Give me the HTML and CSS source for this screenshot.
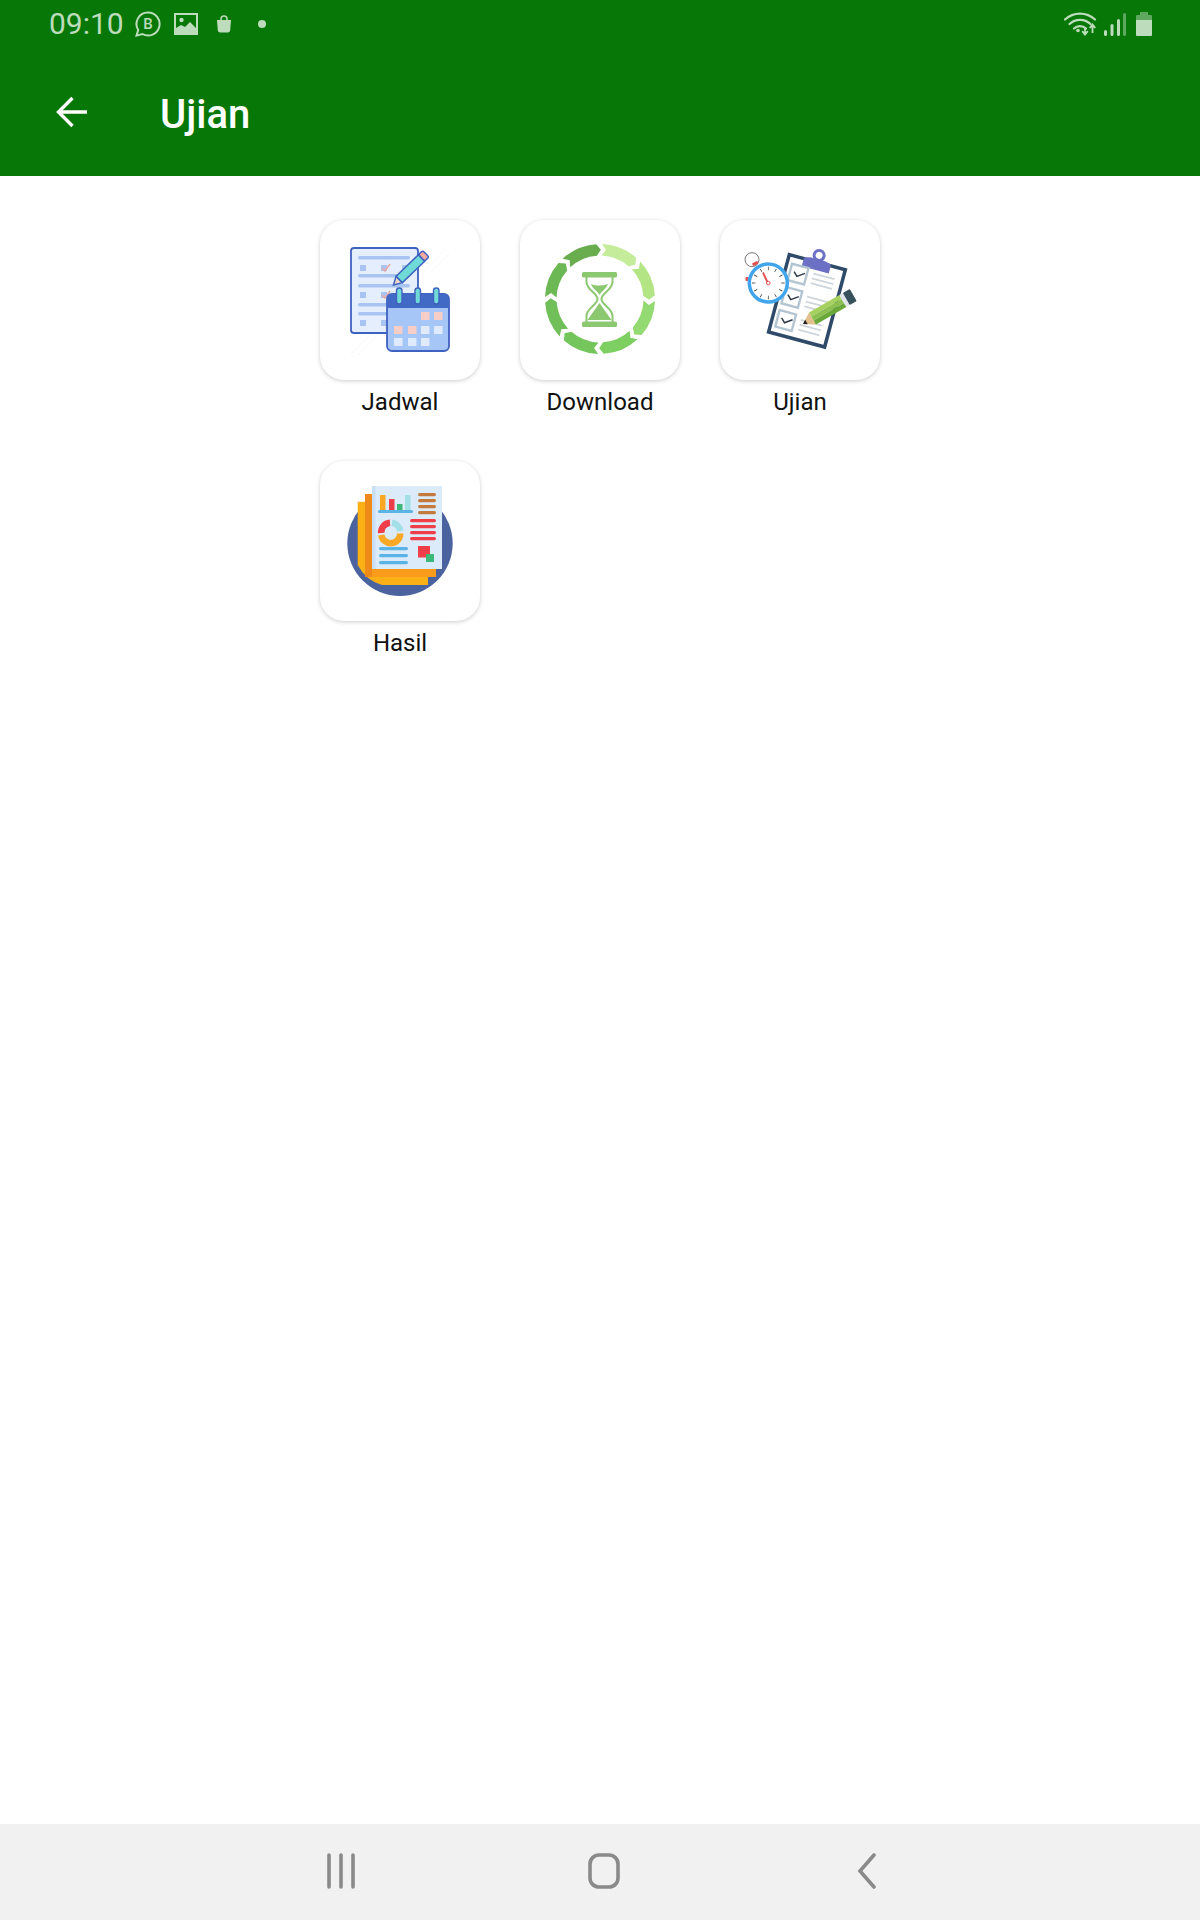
FILE: index.html
```html
<!DOCTYPE html>
<html lang="en">
<head>
    <meta charset="UTF-8">
    <meta name="viewport" content="width=device-width, initial-scale=1.0">
    <title>Ujian</title>
    <link rel="stylesheet" href="styles.css">
</head>
<body>
    <div class="screen">
        <header class="header">
            <div class="status">
                <div class="status-left">
                    <span class="time">09:10</span>
                    <svg class="ic-wa" viewBox="0 0 28 28" width="28" height="28">
                        <path d="M14 2.500a11.500 11.500 0 1 1-5.600 21.500L2.500 25.600l1.700-5.600A11.500 11.500 0 0 1 14 2.500z" fill="none" stroke="#bcdcbc" stroke-width="2"/>
                        <text class="ic-wa-letter" x="14" y="19">B</text>
                    </svg>
                    <svg class="ic-img" viewBox="0 0 24 22" width="24" height="22">
                        <rect x="1" y="1" width="22" height="20" fill="#077808" stroke="#bcdcbc" stroke-width="2"/>
                        <circle cx="7.500" cy="7" r="2.200" fill="#bcdcbc"/>
                        <path d="M2 20v-5l5-3 4 2 5-5 6 6v5z" fill="#bcdcbc"/>
                    </svg>
                    <svg class="ic-bag" viewBox="0 0 16 18" width="16" height="18">
                        <path d="M1 5h14l-.8 10.500a2.500 2.500 0 0 1-2.500 2H4.300a2.500 2.500 0 0 1-2.500-2z" fill="#bcdcbc"/>
                        <path d="M5 6V4a3 3 0 0 1 6 0v2" fill="none" stroke="#bcdcbc" stroke-width="1.500"/>
                    </svg>
                    <span class="dot"></span>
                </div>
                <div class="status-right">
                    <svg viewBox="0 0 33 24" width="33" height="24">
                        <g fill="none" stroke="#bcdcbc" stroke-width="2.200" stroke-linecap="round">
                            <path d="M1 7.500a22 22 0 0 1 30 0"/>
                            <path d="M5.500 12a15.500 15.500 0 0 1 21 0"/>
                            <path d="M10 16.500a9 9 0 0 1 12 0"/>
                        </g>
                        <circle cx="14" cy="18.500" r="1.800" fill="#bcdcbc"/>
                        <path d="M21 15v7m-2.800-2.800L21 22.500l2.800-3.300M28.500 21v-8m-2.800 3L28.500 12.500 31.300 16" fill="none" stroke="#bcdcbc" stroke-width="1.800"/>
                    </svg>
                    <svg viewBox="0 0 22 23" width="22" height="23">
                        <rect x="0" y="17" width="3" height="6" rx="1.500" fill="#bcdcbc"/>
                        <rect x="6.500" y="11" width="3" height="12" rx="1.500" fill="#bcdcbc"/>
                        <rect x="13" y="6" width="3" height="17" rx="1.500" fill="#bcdcbc"/>
                        <rect x="19" y="0" width="3" height="23" rx="1.500" fill="#5fa95f"/>
                    </svg>
                    <svg viewBox="0 0 16 24" width="16" height="24">
                        <path d="M4 0h8v3h3a1 1 0 0 1 1 1v4H0V4a1 1 0 0 1 1-1h3z" fill="#5fa95f"/>
                        <path d="M0 8h16v15a1 1 0 0 1-1 1H1a1 1 0 0 1-1-1z" fill="#bcdcbc"/>
                    </svg>
                </div>
            </div>
            <div class="toolbar">
                <svg class="back" viewBox="0 0 32 32" width="32" height="32">
                    <path d="M31 16H3M16.500 2 2.500 16l14 14" fill="none" stroke="#fff" stroke-width="3.400"/>
                </svg>
                <h1 class="title">Ujian</h1>
            </div>
        </header>

        <main class="menu">
            <div class="menu-item">
                <div class="card">
                    <svg viewBox="0 1 160 160">
                        <g stroke="#f6f8fb" stroke-width="1">
                            <path d="M104 52l22-22M110 54l20-20M30 136l30-30M38 136l24-24"/>
                        </g>
                        <rect x="31" y="29" width="67" height="85" rx="3" fill="#e4eefc" stroke="#3f62c0" stroke-width="1.800"/>
                        <g fill="#a9c4f2">
                            <rect x="38" y="37" width="52" height="3.500" rx="1.700"/>
                            <rect x="38" y="55" width="52" height="3.500" rx="1.700"/>
                            <rect x="38" y="65" width="52" height="3.500" rx="1.700"/>
                            <rect x="38" y="84" width="52" height="3.500" rx="1.700"/>
                            <rect x="38" y="93" width="52" height="3.500" rx="1.700"/>
                            <rect x="40" y="46" width="6" height="6"/>
                            <rect x="40" y="73" width="6" height="6"/>
                            <rect x="40" y="101" width="6" height="6"/>
                            <rect x="61" y="46" width="6" height="6"/>
                            <rect x="61" y="73" width="6" height="6"/>
                            <rect x="61" y="101" width="6" height="6"/>
                            <rect x="82" y="46" width="6" height="6"/>
                        </g>
                        <path d="M62 49l3 3 5-7M62 76l3 3 5-7" fill="none" stroke="#e9a9a6" stroke-width="1.500"/>
                        <g transform="translate(73.500 66) rotate(-44)">
                            <path d="M0 0l8-4.500v9z" fill="#f4d9c8" stroke="#3f62c0" stroke-width="1.500"/>
                            <rect x="8" y="-4.500" width="31" height="9" fill="#6fdad6" stroke="#3f62c0" stroke-width="1.500"/>
                            <rect x="39" y="-4.500" width="6" height="9" rx="2" fill="#f2a9a0" stroke="#3f62c0" stroke-width="1.500"/>
                        </g>
                        <rect x="67" y="75" width="62" height="57" rx="5" fill="#a6c6f7" stroke="#3f62c0" stroke-width="1.800"/>
                        <path d="M67 89v-9a5 5 0 0 1 5-5h52a5 5 0 0 1 5 5v9z" fill="#4169c6"/>
                        <g fill="#6fdad6" stroke="#3f62c0" stroke-width="1.400">
                            <rect x="76.500" y="69" width="5.500" height="16" rx="2.700"/>
                            <rect x="95" y="69" width="5.500" height="16" rx="2.700"/>
                            <rect x="113.500" y="69" width="5.500" height="16" rx="2.700"/>
                        </g>
                        <g fill="#f7cdc7">
                            <rect x="101" y="93" width="8.500" height="8"/>
                            <rect x="114" y="93" width="8.500" height="8"/>
                            <rect x="74" y="107" width="8.500" height="8"/>
                            <rect x="88" y="107" width="8.500" height="8"/>
                        </g>
                        <g fill="#dfeafb">
                            <rect x="101" y="107" width="8.500" height="8"/>
                            <rect x="114" y="107" width="8.500" height="8"/>
                            <rect x="74" y="119" width="8.500" height="8"/>
                            <rect x="88" y="119" width="8.500" height="8"/>
                            <rect x="101" y="119" width="8.500" height="8"/>
                        </g>
                    </svg>
                </div>
                <span class="menu-label">Jadwal</span>
            </div>

            <div class="menu-item">
                <div class="card">
                    <svg viewBox="0 1 160 160">
                        <defs>
                            <path id="seg" d="M81.900 25A55 55 0 0 1 116.100 38.500L115.400 45.800 108.500 47.200A43.500 43.500 0 0 0 81.500 36.500L86 31.100Z"/>
                        </defs>
                        <use href="#seg" fill="#c4ec9b"/>
                        <use href="#seg" fill="#b3e585" transform="rotate(45 80 80)"/>
                        <use href="#seg" fill="#93da72" transform="rotate(90 80 80)"/>
                        <use href="#seg" fill="#7dcf62" transform="rotate(135 80 80)"/>
                        <use href="#seg" fill="#74c65c" transform="rotate(180 80 80)"/>
                        <use href="#seg" fill="#70bf59" transform="rotate(225 80 80)"/>
                        <use href="#seg" fill="#6cb855" transform="rotate(270 80 80)"/>
                        <use href="#seg" fill="#69ad4f" transform="rotate(315 80 80)"/>
                        <rect x="62" y="53" width="35" height="5.500" rx="1.500" fill="#8bc870"/>
                        <rect x="62" y="102.500" width="35" height="5.500" rx="1.500" fill="#8bc870"/>
                        <path d="M66.500 58v5c0 8 11 11 11 17s-11 9-11 17v6M92.500 58v5c0 8-11 11-11 17s11 9 11 17v6" fill="none" stroke="#8bc870" stroke-width="2"/>
                        <path d="M71 65c5 2 11 2 17 0-2 5-6 7-8.500 11-2-4-7-6-8.500-11z" fill="#8bc870"/>
                        <path d="M79.500 84l12 17H67.500z" fill="#8bc870"/>
                    </svg>
                </div>
                <span class="menu-label">Download</span>
            </div>

            <div class="menu-item">
                <div class="card">
                    <svg viewBox="0 1 160 160">
                        <g transform="translate(69.300 35.700) rotate(15)">
                            <rect width="58" height="80" fill="#fff" stroke="#2e4a68" stroke-width="3.500"/>
                            <circle cx="29" cy="-7" r="5" fill="#fff" stroke="#6c71c6" stroke-width="3"/>
                            <path d="M15 8V-1l6-2h16l6 2v9z" fill="#6c71c6"/>
                            <g fill="none" stroke="#b4c5d2" stroke-width="2.400">
                                <rect x="5" y="8" width="17" height="17"/>
                                <rect x="5" y="32" width="17" height="17"/>
                                <rect x="5" y="56" width="17" height="17"/>
                            </g>
                            <path d="M9 15l4 4 7-5M9 39l4 4 7-5M9 63l4 4 7-5" fill="none" stroke="#2e3a48" stroke-width="1.500"/>
                            <path d="M28 12h22M28 17h22M28 22h22M28 36h22M28 41h22M28 46h22M28 60h22M28 65h22M28 70h22" stroke="#cfd6db" stroke-width="1.800"/>
                        </g>
                        <circle cx="32" cy="40.700" r="7" fill="#fff" stroke="#555" stroke-width="0.800"/>
                        <rect x="32" y="43" width="6" height="3" rx="1" fill="#e2504f" transform="rotate(-25 35 44)"/>
                        <rect x="25.500" y="58" width="3" height="4" rx="1" fill="#e2504f"/>
                        <circle cx="48.300" cy="64" r="19" fill="#fff" stroke="#41a5ee" stroke-width="3.500"/>
                        <circle class="watch-ticks" cx="48.300" cy="64" r="14.500" pathLength="120"/>
                        <path d="M48.300 65l-5.300-11.500" stroke="#e2504f" stroke-width="1.800"/>
                        <circle cx="48.300" cy="64" r="1.800" fill="#fff" stroke="#e2504f"/>
                        <g transform="translate(83 105) rotate(-30)">
                            <path d="M0 0l11-7v14z" fill="#e3c08c"/>
                            <path d="M0 0l4-2.500v5z" fill="#222"/>
                            <rect x="11" y="-7" width="35" height="4.700" fill="#a6d15f"/>
                            <rect x="11" y="-2.400" width="35" height="4.700" fill="#8cc152"/>
                            <rect x="11" y="2.300" width="35" height="4.700" fill="#6aa83a"/>
                            <rect x="46" y="-7" width="4" height="14" fill="#dfe5e8"/>
                            <rect x="50" y="-7" width="8" height="14" rx="1" fill="#36505c"/>
                        </g>
                    </svg>
                </div>
                <span class="menu-label">Ujian</span>
            </div>

            <div class="menu-item">
                <div class="card">
                    <svg viewBox="0 1 160 160">
                        <circle cx="80" cy="83.300" r="52.700" fill="#4a639f"/>
                        <path d="M37.700 41.700h70.300v83.300H62a40 40 0 0 1-24.300-20z" fill="#fbb016"/>
                        <rect x="45" y="34" width="71" height="83" fill="#fb9a1b"/>
                        <rect x="45" y="34" width="7" height="83" fill="#ef8a18"/>
                        <rect x="52" y="26" width="70" height="83" fill="#dcebf9"/>
                        <rect x="52" y="26" width="3.500" height="83" fill="#c9def3"/>
                        <rect x="60" y="35" width="5.500" height="15" fill="#f9a825"/>
                        <rect x="69" y="39" width="5.500" height="11" fill="#ef3e4a"/>
                        <rect x="77" y="44" width="5.500" height="6" fill="#3cb878"/>
                        <rect x="85" y="35" width="5.500" height="15" fill="#a3e0e6"/>
                        <rect x="58" y="50" width="35" height="3" rx="1.500" fill="#5ab4e6"/>
                        <g fill="#c47a3f">
                            <rect x="98" y="33" width="18" height="3.200" rx="1.600"/>
                            <rect x="98" y="39" width="18" height="3.200" rx="1.600"/>
                            <rect x="98" y="45" width="18" height="3.200" rx="1.600"/>
                            <rect x="98" y="51" width="18" height="3.200" rx="1.600"/>
                        </g>
                        <path d="M61.200 73A9.500 9.500 0 0 1 70 62.800" fill="none" stroke="#ef3e4a" stroke-width="6.500"/>
                        <path d="M72 62.800A9.500 9.500 0 0 1 80.200 71" fill="none" stroke="#a3e0e6" stroke-width="6.500"/>
                        <path d="M80.200 73.500A9.500 9.500 0 0 1 61.300 75" fill="none" stroke="#f9a825" stroke-width="6.500"/>
                        <g fill="#ef3e4a">
                            <rect x="90" y="59" width="26" height="3.200" rx="1.600"/>
                            <rect x="90" y="65" width="26" height="3.200" rx="1.600"/>
                            <rect x="90" y="71" width="26" height="3.200" rx="1.600"/>
                            <rect x="90" y="77" width="26" height="3.200" rx="1.600"/>
                        </g>
                        <g fill="#5ab4e6">
                            <rect x="59" y="87" width="29" height="3.200" rx="1.600"/>
                            <rect x="59" y="94" width="29" height="3.200" rx="1.600"/>
                            <rect x="59" y="101" width="29" height="3.200" rx="1.600"/>
                        </g>
                        <rect x="98" y="86" width="12" height="11.500" fill="#ef3e4a"/>
                        <rect x="106" y="94" width="8" height="8" fill="#3cb878"/>
                    </svg>
                </div>
                <span class="menu-label">Hasil</span>
            </div>
        </main>

        <nav class="navbar">
            <svg viewBox="0 0 28 36" width="28" height="36">
                <path d="M2 2v32M14 2v32M26 2v32" stroke="#8a8a8a" stroke-width="3.600" stroke-linecap="round"/>
            </svg>
            <svg viewBox="0 0 32 36" width="32" height="36">
                <rect x="2" y="2" width="28" height="32" rx="9" fill="none" stroke="#8a8a8a" stroke-width="3.600"/>
            </svg>
            <svg viewBox="0 0 20 36" width="20" height="36">
                <path d="M17 2 3 18l14 16" fill="none" stroke="#8a8a8a" stroke-width="3.600" stroke-linecap="round"/>
            </svg>
        </nav>
    </div>
</body>
</html>
```

FILE: styles.css
```css
html, body {
    margin: 0;
    padding: 0;
    background-color: #fff;
}
body {
    font-family: Roboto, "Liberation Sans", sans-serif;
    color: #111;
}
.screen {
    display: flex;
    flex-direction: column;
    height: 1920px;
}
.header {
    height: 176px;
    background-color: #077808;
    display: flex;
    flex-direction: column;
}
.status {
    height: 48px;
    padding: 0 48px 0 49px;
    display: flex;
    justify-content: space-between;
    align-items: center;
}
.status-left, .status-right {
    display: flex;
    align-items: center;
}
.time {
    font-size: 30px;
    color: #bcdcbc;
    line-height: 48px;
}
.ic-wa {
    margin-left: 10px;
}
.ic-wa-letter {
    font-size: 15px;
    font-weight: 500;
    fill: #bcdcbc;
    text-anchor: middle;
}
.ic-img {
    margin-left: 12px;
}
.ic-bag {
    margin-left: 18px;
}
.dot {
    width: 8px;
    height: 8px;
    margin-left: 26px;
    border-radius: 50%;
    background-color: #bcdcbc;
}
.status-right {
    gap: 7px;
}
.status-right svg:last-child {
    margin-left: 3px;
}
.toolbar {
    flex: 1;
    display: flex;
    align-items: center;
    padding-left: 56px;
}
.title {
    margin: 4px 0 0 72px;
    font-size: 40px;
    font-weight: 500;
    color: #fff;
}
.menu {
    flex: 1;
    display: grid;
    grid-template-columns: repeat(3, 160px);
    grid-auto-rows: 241px;
    column-gap: 40px;
    justify-content: center;
    align-content: start;
    padding-top: 44px;
}
.menu-item {
    display: flex;
    flex-direction: column;
    align-items: center;
}
.card {
    width: 160px;
    height: 160px;
    background-color: #fff;
    border-radius: 24px;
    box-shadow: 0 1px 4px rgba(0, 0, 0, 0.2);
}
.card svg {
    display: block;
    width: 160px;
    height: 160px;
}
.watch-ticks {
    fill: none;
    stroke: #333;
    stroke-width: 3.5;
    stroke-dasharray: 1 9;
    stroke-dashoffset: 0.5;
}
.menu-label {
    margin-top: 9px;
    font-size: 24px;
    line-height: 27px;
}
.navbar {
    height: 96px;
    background-color: #f1f1f1;
    display: flex;
    align-items: center;
    padding: 0 0 2px 327px;
    box-sizing: border-box;
    gap: 233px;
}
.navbar svg:last-child {
    margin-left: 4px;
}
```
